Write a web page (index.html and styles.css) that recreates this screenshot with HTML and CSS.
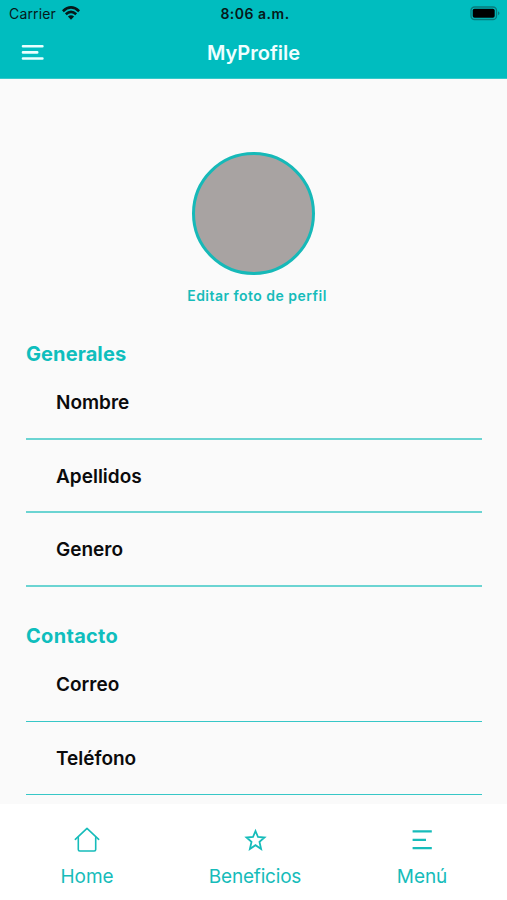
FILE: index.html
```html
<!DOCTYPE html>
<html lang="es">
<head>
<meta charset="utf-8">
<title>MyProfile</title>
<link rel="stylesheet" href="styles.css">
</head>
<body>
<header class="header">
  <div class="status">
    <div class="carrier"><span>Carrier</span>
      <svg class="wifi" width="18" height="14" viewBox="0 0 18 14"><g fill="none" stroke="#061919" stroke-width="2.6"><path d="M.9 5.2Q9-2.4 17.1 5.2"/><path d="M3.8 8.2Q9 3.4 14.2 8.2"/></g><path d="M5.9 10.5Q9 7.9 12.1 10.5L9 13.8Z" fill="#061919"/></svg>
    </div>
    <span class="time">8:06 a.m.</span>
    <svg class="battery" width="31" height="15" viewBox="0 0 31 15"><rect x="1" y="1" width="25.5" height="12.5" rx="3.6" fill="none" stroke="#087b7c" stroke-width="1.3"/><rect x="2.7" y="2.8" width="22" height="9" rx="1.8" fill="#000"/><path d="M28 5.2Q31 7.2 28 9.3Z" fill="#087b7c"/></svg>
  </div>
  <div class="titlebar">
    <svg class="burger" width="24" height="18" viewBox="0 0 24 18"><path d="M2 2.2H21.4M2 8.4H16.2M2 14.5H21.4" stroke="#eaffff" stroke-width="2.6" stroke-linecap="round"/></svg>
    <h1 class="title">MyProfile</h1>
  </div>
</header>
<main class="content">
  <div class="avatar"></div>
  <a class="edit">Editar foto de perfil</a>
  <section class="group">
    <h2 class="heading">Generales</h2>
    <div class="row">Nombre</div>
    <div class="row">Apellidos</div>
    <div class="row">Genero</div>
  </section>
  <section class="group">
    <h2 class="heading">Contacto</h2>
    <div class="row thin">Correo</div>
    <div class="row thin">Teléfono</div>
  </section>
</main>
<nav class="tabs">
  <a class="tab"><svg width="28" height="28" viewBox="0 0 28 28"><g fill="none" stroke="#16bcba" stroke-width="1.6" stroke-linecap="round" stroke-linejoin="round"><path d="M2.3 13.3L14 2.4L25.7 13.3"/><path d="M5.3 11.5V23.5Q5.3 25 6.8 25H21.2Q22.7 25 22.7 23.5V11.5"/></g></svg><span>Home</span></a>
  <a class="tab benefits"><svg width="28" height="28" viewBox="0 0 28 28"><path d="M14.5 5L17 11L23.5 11.5L18.5 15.9L20.1 23L14.5 19.2L8.9 23L10.5 15.9L5.5 11.5L12 11Z" fill="none" stroke="#16bcba" stroke-width="1.8"/></svg><span>Beneficios</span></a>
  <a class="tab menu"><svg width="28" height="28" viewBox="0 0 28 28"><path d="M4.6 5.4H23.8M4.6 13.8H18M4.6 22.2H23.8" stroke="#16bcba" stroke-width="2.2"/></svg><span>Menú</span></a>
</nav>
</body>
</html>
```
FILE: styles.css
```css
* { box-sizing: border-box; }
body {
  margin: 0;
  width: 507px;
  height: 900px;
  overflow: hidden;
  display: flex;
  flex-direction: column;
  background: #fafafa;
  font-family: Inter, "Liberation Sans", sans-serif;
  color: #0b0b0c;
}
.header { height: 79px; background: #00bdbf; border-bottom: 1px solid #35c9ca; }
.status {
  display: grid;
  grid-template-columns: 1fr auto 1fr;
  align-items: center;
  height: 27px;
  padding: 0 6px 0 9px;
  font-size: 14px;
  line-height: 18px;
  color: #061919;
}
.carrier { display: flex; align-items: center; gap: 6px; letter-spacing: .15px; }
.wifi { margin-top: -1px; }
.time { font-weight: 600; letter-spacing: .5px; }
.battery { justify-self: end; }
.titlebar {
  display: grid;
  grid-template-columns: 80px 1fr 80px;
  align-items: center;
  height: 51px;
}
.burger { margin-left: 21px; }
.title { margin: 0; text-align: center; font-size: 20px; line-height: 24px; font-weight: 600; color: #f0ffff; }
.content { flex: none; height: 725px; padding: 73px 25px 0; overflow: hidden; }
.avatar { width: 123px; height: 123px; margin: 0 auto; border: 3px solid #16b9b8; border-radius: 50%; background: #a8a3a2; }
.edit { display: block; margin-top: 11px; padding-left: 7px; text-align: center; font-size: 14px; line-height: 20px; font-weight: 600; letter-spacing: .47px; color: #16bcba; }
.group { margin-top: 36px; }
.heading { margin: 0 0 -1px; padding-left: 1px; font-size: 20px; line-height: 25px; font-weight: 700; letter-spacing: .1px; color: #0fbebd; }
.row { height: 73.7px; margin-left: 1px; padding: 24px 0 0 30px; border-bottom: 2px solid #6bd4d2; font-size: 19px; line-height: 26px; font-weight: 600; }
.group + .group { margin-top: 37px; }
.group + .group .heading { letter-spacing: .3px; }
.tabs { height: 96px; background: #fff; display: grid; grid-template-columns: 174px 162px 171px; }
.tab { display: flex; flex-direction: column; align-items: center; padding-top: 22px; font-size: 19px; line-height: 24px; color: #16bcba; }
.tab span { margin-top: 11px; letter-spacing: -.08px; }
.benefits span { letter-spacing: -.2px; }
.menu span { padding-left: 1px; }
.row.thin { border-bottom: 1px solid #37c7c7; }
```
